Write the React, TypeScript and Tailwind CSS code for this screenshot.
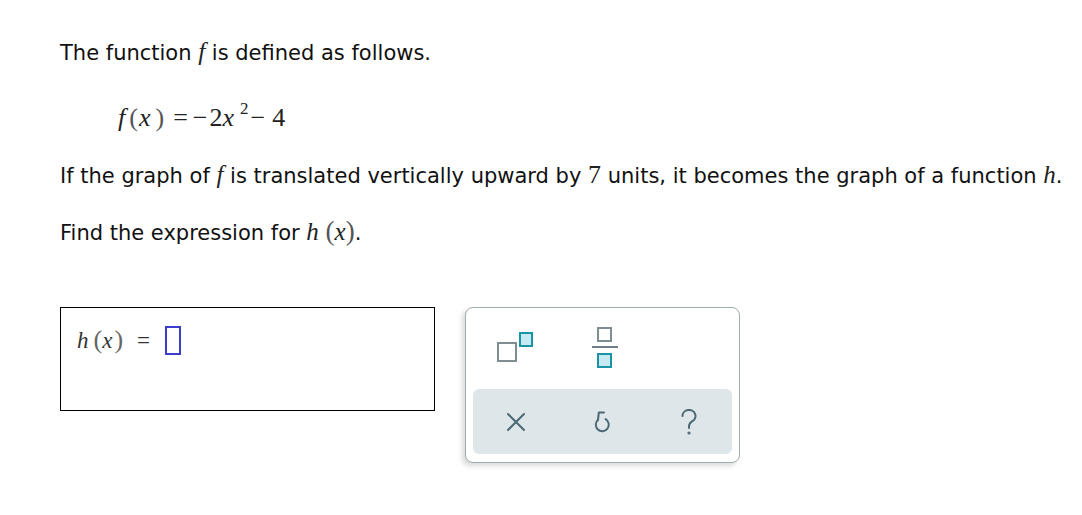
import React from 'react'

const sans = "font-['DejaVu_Sans','Verdana',sans-serif]"
const serif = "font-['Liberation_Serif','Times_New_Roman',serif]"

const MathI = ({ children }: { children: React.ReactNode }) => (
  <span className={`${serif} italic text-[25px] leading-[20px] text-[#222]`}>{children}</span>
)

const Paren = ({ children }: { children: React.ReactNode }) => (
  <span className={`${serif} text-[27px] leading-[20px] text-[#555]`}>{children}</span>
)

const SupIcon = () => (
  <svg width="38" height="32" viewBox="0 0 38 32">
    <rect x="2" y="12" width="18" height="18" fill="#fff" stroke="#7d8d92" strokeWidth="2" />
    <rect x="24" y="2" width="12" height="13" fill="#c6e9f2" stroke="#1a93a6" strokeWidth="2" />
  </svg>
)

const FracIcon = () => (
  <svg width="26" height="41" viewBox="0 0 26 41">
    <rect x="6" y="1" width="13" height="13" fill="#fff" stroke="#7d8d92" strokeWidth="2" />
    <rect x="0" y="19" width="26" height="2" fill="#6f7f85" />
    <rect x="6" y="27" width="13" height="13" fill="#c6e9f2" stroke="#1a93a6" strokeWidth="2" />
  </svg>
)

const ClearIcon = () => (
  <svg width="20" height="20" viewBox="0 0 20 20" fill="none" stroke="#4b6974" strokeWidth="2" strokeLinecap="round">
    <path d="M2 2L18 18M18 2L2 18" />
  </svg>
)

const UndoIcon = () => (
  <svg width="22" height="24" viewBox="0 0 22 24" fill="none" stroke="#4b6974" strokeWidth="2" strokeLinecap="round" strokeLinejoin="round">
    <path d="M13 2.5H7.8L7 9.8" />
    <path d="M7 9.8A6.5 6.5 0 1 0 14.6 9.1" />
  </svg>
)

const HelpIcon = () => (
  <svg width="20" height="26" viewBox="0 0 20 26" fill="none" stroke="#4b6974" strokeWidth="2" strokeLinecap="round">
    <path d="M3.5 7A6.5 6 0 1 1 13 12.3C11 13.6 10 15 10 17.5V19" />
    <circle cx="10" cy="24" r="0.6" fill="#4b6974" />
  </svg>
)

export default function App() {
  return (
    <div className={`${sans} w-[1082px] h-[515px] bg-white text-[#111] text-[21px] pl-[60px] pt-[41px] overflow-hidden`}>
      <p className="h-[24px] leading-[24px] whitespace-nowrap">
        The function <MathI>f</MathI> is defined as follows.
      </p>

      <div className={`${serif} mt-[35px] ml-[58px] h-[30px] leading-[30px] text-[26px] text-[#222] whitespace-nowrap`}>
        <span className="italic">f</span>
        <span className="ml-[4px] text-[#555]">(</span>
        <span className="ml-[1px] italic">x</span>
        <span className="ml-[5px] text-[#555]">)</span>
        <span className="ml-[9px]">=</span>
        <span className="ml-[5px]">−</span>
        <span className="ml-[2px]">2</span>
        <span className="italic">x</span>
        <span className="ml-[6px] text-[17px] align-[12px] leading-none">2</span>
        <span className="ml-[2px]">−</span>
        <span className="ml-[7px]">4</span>
      </div>

      <p className="mt-[34px] h-[24px] leading-[24px] whitespace-nowrap">
        If the graph of <MathI>f</MathI> is translated vertically upward by{' '}
        <span className={`${serif} text-[26px] leading-[20px] text-[#222]`}>7</span> units, it becomes the graph of a
        function <MathI>h</MathI>.
      </p>

      <p className="mt-[33px] h-[24px] leading-[24px] whitespace-nowrap">
        Find the expression for <MathI>h</MathI>
        <Paren>{' ('}</Paren>
        <MathI>x</MathI>
        <Paren>)</Paren>.
      </p>

      <div className="mt-[62px] flex items-start gap-[30px]">
        <div className="w-[375px] h-[104px] border border-black pt-[18px] pl-[16px]">
          <div className={`${serif} text-[23px] leading-[26px] text-[#333] whitespace-nowrap`}>
            <span className="italic">h</span>
            <span className="ml-[5px] text-[26px] text-[#666]">(</span>
            <span className="italic">x</span>
            <span className="ml-[2px] text-[26px] text-[#666]">)</span>
            <span className="ml-[14px]">=</span>
            <span className="ml-[15px] inline-block w-[16px] h-[29px] border-2 border-[#3d3dcc] align-[-7px]" />
          </div>
        </div>

        <div className="w-[275px] h-[156px] rounded-[8px] border border-[#a3acb0] bg-white shadow-[-3px_3px_5px_rgba(0,0,0,0.15)] flex flex-col">
          <div className="h-[81px] flex items-start pt-[19px] pl-[30px]">
            <div className="mt-[4px]">
              <SupIcon />
            </div>
            <div className="ml-[58px]">
              <FracIcon />
            </div>
          </div>
          <div className="mx-[7px] h-[65px] rounded-[6px] bg-[#dfe6e9] grid grid-cols-3 items-center justify-items-center">
            <ClearIcon />
            <UndoIcon />
            <HelpIcon />
          </div>
        </div>
      </div>
    </div>
  )
}
